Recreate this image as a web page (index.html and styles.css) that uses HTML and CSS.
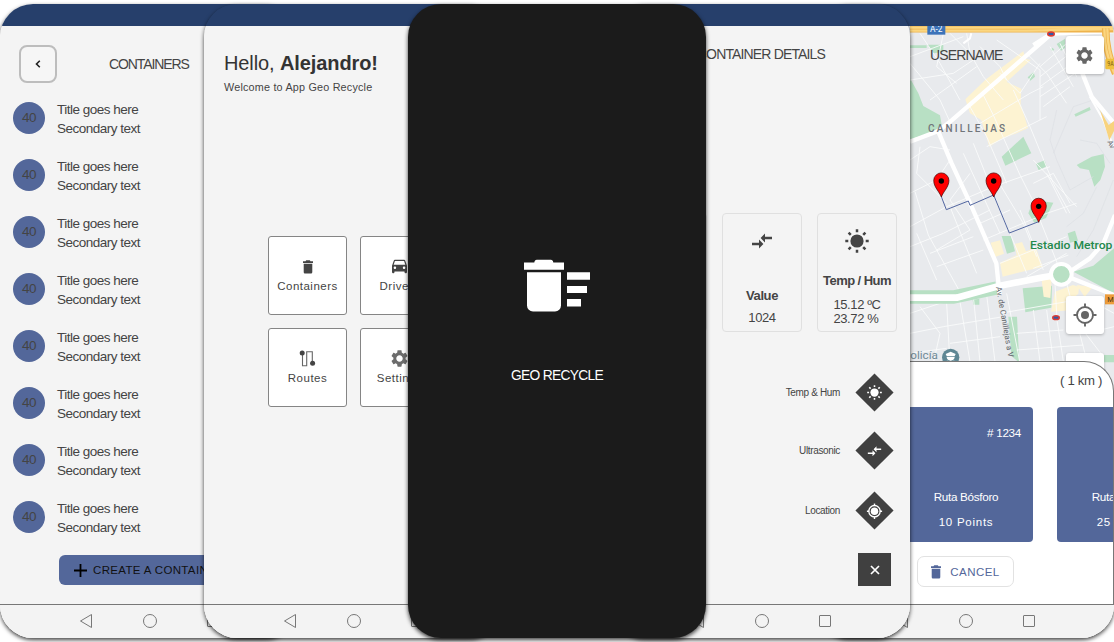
FILE: index.html
```html
<!DOCTYPE html>
<html lang="en">
<head>
<meta charset="utf-8">
<title>Geo Recycle</title>
<link rel="stylesheet" href="styles.css">
</head>
<body>
<svg class="defs" width="0" height="0">
  <defs>
    <symbol id="i-trash" viewBox="5 2 14 20" preserveAspectRatio="none"><path d="M6 19c0 1.4.9 2.4 2.2 2.4h7.600c1.300 0 2.200-1 2.200-2.400V7.200H6V19zM19 3.800h-3.500l-1-1.500h-5l-1 1.500H5v2.400h14z"/></symbol>
    <symbol id="i-gear" viewBox="2 2 20 20"><path d="M19.140 12.940c.040-.300.060-.610.060-.940 0-.320-.020-.640-.070-.940l2.030-1.580c.180-.140.230-.410.120-.610l-1.920-3.320c-.120-.220-.370-.290-.590-.220l-2.390.960c-.500-.380-1.030-.700-1.620-.940l-.360-2.540c-.040-.240-.240-.410-.480-.410h-3.840c-.240 0-.430.170-.470.410l-.360 2.540c-.590.240-1.130.570-1.620.940l-2.390-.960c-.220-.080-.470 0-.590.220L2.740 8.870c-.120.210-.080.470.120.610l2.030 1.580c-.050.300-.090.630-.090.940s.020.640.070.940l-2.030 1.580c-.180.140-.230.410-.120.610l1.920 3.320c.120.220.370.290.590.220l2.390-.960c.500.380 1.030.700 1.620.940l.360 2.540c.050.240.240.410.480.410h3.840c.240 0 .440-.170.470-.410l.360-2.540c.590-.240 1.130-.560 1.620-.940l2.390.960c.220.080.470 0 .590-.220l1.920-3.320c.120-.220.070-.470-.120-.610l-2.010-1.580zM12 15.800c-2.100 0-3.800-1.700-3.800-3.800s1.700-3.800 3.800-3.800 3.800 1.700 3.800 3.800-1.700 3.800-3.800 3.800z"/></symbol>
    <symbol id="i-car" viewBox="0 0 24 24"><path d="M18.920 5.010C18.720 4.420 18.160 4 17.500 4h-11c-.660 0-1.210.420-1.420 1.010L3 11v8c0 .550.450 1 1 1h1c.550 0 1-.450 1-1v-1h12v1c0 .550.450 1 1 1h1c.550 0 1-.450 1-1v-8l-2.080-5.990zM6.500 15c-.830 0-1.500-.670-1.500-1.500S5.670 12 6.500 12s1.500.670 1.500 1.500S7.330 15 6.500 15zm11 0c-.830 0-1.500-.670-1.500-1.500s.670-1.500 1.500-1.500 1.500.670 1.500 1.500-.670 1.500-1.500 1.500zM5 10l1.500-4.500h11L19 10H5z"/></symbol>
    <symbol id="i-compare" viewBox="0 0 24 24"><path d="M9 13.800H2v2.400h7v3.200L13.400 15 9 10.600zm6-.4v-3.200h7V7.800h-7V4.600L10.600 9z"/></symbol>
    <symbol id="i-sun" viewBox="-12 -12 24 24"><circle r="6.600"/><path d="M0-11.700V-8.700M0 11.700V8.700M-11.700 0h3M11.700 0h-3M-8.400-8.400l2.200 2.200M8.400-8.400L6.200-6.200M-8.400 8.400l2.200-2.200M8.400 8.400L6.200 6.200" stroke="currentColor" stroke-width="2.500"/></symbol>
    <symbol id="i-target" viewBox="-12 -12 24 24"><g fill="none" stroke="currentColor"><circle r="8" stroke-width="1.900"/><path d="M0-11.500V-7.500M0 11.500V7.500M-11.500 0h4M11.500 0h-4" stroke-width="1.900"/></g><circle r="4"/></symbol>
    <symbol id="i-ring" viewBox="-12 -12 24 24"><g fill="none" stroke="currentColor"><circle r="8.500" stroke-width="2"/><path d="M0-11.800V-8M0 11.800V8M-11.800 0H-8M11.800 0H8" stroke-width="2.200"/></g><circle r="5.600"/></symbol>
    <symbol id="i-back" viewBox="0 0 14 16"><path d="M12.500 1.500v13L1.500 8z" fill="none" stroke="currentColor"/></symbol>
    <g id="pin"><path d="M0 0C-2-5.500-7.600-10-7.600-16.500a7.600 7.600 0 0 1 15.200 0C7.600-10 2-5.500 0 0z" fill="#f00" stroke="#400" stroke-width=".7"/><circle cy="-16" r="2.700" fill="#000"/></g>
  </defs>
</svg>

<main class="stage">
  <section class="phone">
    <div class="status"></div>
    <div class="screen list-screen">
      <header class="list-head">
        <button class="back"><svg width="6" height="8" viewBox="0 0 6 8"><path d="M4.800.8 1.500 4l3.300 3.200" fill="none" stroke="#222" stroke-width="1.600"/></svg></button>
        <h2 class="caption">CONTAINERS</h2>
      </header>
      <ul class="list">
        <li class="row"><span class="badge">40</span><p>Title goes here<br>Secondary text</p></li>
        <li class="row"><span class="badge">40</span><p>Title goes here<br>Secondary text</p></li>
        <li class="row"><span class="badge">40</span><p>Title goes here<br>Secondary text</p></li>
        <li class="row"><span class="badge">40</span><p>Title goes here<br>Secondary text</p></li>
        <li class="row"><span class="badge">40</span><p>Title goes here<br>Secondary text</p></li>
        <li class="row"><span class="badge">40</span><p>Title goes here<br>Secondary text</p></li>
        <li class="row"><span class="badge">40</span><p>Title goes here<br>Secondary text</p></li>
        <li class="row"><span class="badge">40</span><p>Title goes here<br>Secondary text</p></li>
      </ul>
      <button class="create"><svg width="13" height="13" viewBox="0 0 13 13"><path d="M6.500 0v13M0 6.500h13" stroke="#000" stroke-width="1.800"/></svg>CREATE A CONTAINER</button>
    </div>
    <nav class="nav"><svg width="14" height="16"><use href="#i-back"/></svg><i class="home"></i><i class="recent"></i></nav>
  </section>

  <section class="phone mid">
    <div class="status"></div>
    <div class="screen home-screen">
      <h1 class="hello">Hello, <b>Alejandro!</b></h1>
      <p class="welcome">Welcome to App Geo Recycle</p>
      <div class="tiles">
        <div class="tile"><svg class="bin" width="10" height="14"><use href="#i-trash"/></svg>Containers</div>
        <div class="tile"><svg width="21" height="17"><use href="#i-car" width="21" height="20" y="-1.500"/></svg>Drivers</div>
        <div class="tile"><svg width="17" height="17" viewBox="0 0 17 17"><path d="M3.500 3v12.700h4.200V1.800h5.600v11" fill="none" stroke="#666" stroke-width="1.100"/><circle cx="3.200" cy="3" r="2.500"/><circle cx="13.600" cy="13.200" r="2.500"/></svg>Routes</div>
        <div class="tile"><svg class="grey" width="17" height="17"><use href="#i-gear"/></svg>Settings</div>
      </div>
    </div>
    <nav class="nav"><svg width="14" height="16"><use href="#i-back"/></svg><i class="home"></i><i class="recent"></i></nav>
  </section>

  <section class="phone splash">
    <svg class="logo" width="66" height="54" viewBox="0 0 66 54" fill="#fff"><path d="M0 3.500h10.300c.3-1.800 1-2.700 2.500-2.700h14c1.500 0 2.200.9 2.500 2.700H40v7.300H0zM3 13.300h34v33.200a6 6 0 0 1-6 6H9a6 6 0 0 1-6-6zM43 13.300h23v7.500H43zM43 27h20v7H43zM43 40h14v7.500H43z"/></svg>
    <p class="brand">GEO RECYCLE</p>
  </section>

  <section class="phone mid">
    <div class="status"></div>
    <div class="screen detail-screen">
      <h2 class="caption">CONTAINER DETAILS</h2>
      <div class="stats">
        <div class="stat"></div>
        <div class="stat value"><svg width="24" height="24"><use href="#i-compare"/></svg><b>Value</b><span>1024</span></div>
        <div class="stat temp"><svg width="24" height="24"><use href="#i-sun"/></svg><b>Temp / Hum</b><span>15.12 ºC<br>23.72 %</span></div>
      </div>
      <div class="actions">
        <div class="action">Temp &amp; Hum<span class="diamond"><svg width="15" height="15"><use href="#i-sun"/></svg></span></div>
        <div class="action">Ultrasonic<span class="diamond"><svg width="16" height="16"><use href="#i-compare"/></svg></span></div>
        <div class="action low">Location<span class="diamond"><svg width="16" height="16"><use href="#i-ring"/></svg></span></div>
      </div>
      <button class="close"><svg width="10" height="10" viewBox="0 0 10 10"><path d="M1 1l8 8M9 1l-8 8" stroke="#fff" stroke-width="1.700"/></svg></button>
    </div>
    <nav class="nav"><svg width="14" height="16"><use href="#i-back"/></svg><i class="home"></i><i class="recent"></i></nav>
  </section>

  <section class="phone">
    <div class="status"></div>
    <div class="screen map-screen">
      <svg class="map" width="298" height="370" viewBox="-252 78 894 1110">
        <rect x="-252" y="78" width="894" height="1110" fill="#e8eaed"/>
        <g fill="#b8e0c4">
          <path d="M30 235l25 45 15 38 50 28 5 28-22 22-73 22zM30 136h50v8H30zM82 134h48v22l-30 4zM383 232l18-16 4 14-14 12zM305 470l65-60 24 50-78 37zM408 491l26-10 6 18-24 12zM530 495l45-25 36-8 4 38-14 40-18 20-16-50-27-5zM523 343l46-22 3 9-45 20zM300 328l28-22v14l-26 18zM470 132l25-16v28l-12 8zM385 640l15-40 60 8-22 46-35 14zM305 708h28l12 46-24 7zM503 700l22-8 9 30-24 6zM520 815l60-18 62-52v135zM368 865l88-8-2 66-78 14zM325 950h26l7 138-24-20zM610 1065h32v22h-32zM218 900l20-4v18h-18zM452 148l6-5 5 6-6 5z"/>
        </g>
        <g fill="#fdf3d2">
          <path d="M196 298l62-60 112-84 6 22 16 4-72 66 44 20-2 46 22 72-34 16-46 16-36 24-24-80-34-20zM272 728l28-7 12 40-26 10zM300 788l50-22-6-34 22-6 12 28 30-10 20 56-120 30zM425 840l30-4-4 58-20-4zM465 875l54-20 18 6-2 20-22 20-2 30-58 4zM530 855l48 6-24 30z"/>
        </g>
        <g fill="none" stroke="#fafbfc" stroke-width="2.600">
          <path d="M30 190l90 110 32 70M60 100l60 90 60 110M130 100l-20 100 60 50M150 100l60 60 40 70 60 70M30 170l160-60M30 240l130-20 60-40M90 300l140-100M200 100l10 60M240 140l60 60 20 40M290 120l130 90v150M300 220l60 60 60-90M250 285l30 60 80 180 60 120M210 320l50 90 60 140M340 270l50 110 70 170 50 90M240 370l150-90 40-20M260 440l120-60 60-30M380 160l60 60 60 90M420 200l80-70M420 230l90-70M420 260l110-80M420 290l120-80M430 320l80-60M450 140l70 120M480 130l50 100"/>
          <path d="M30 480l60-40 60 10M30 580l80-40 40-60M60 440l-10 80 60 60 30 30M30 680l110-60 140-60 170-60M150 600l60 90-100 60M45 575l40 130 100 180M150 620l80 200M210 520l-60 80M190 460l110 240M220 430l100 250M280 520l90 150 40 100M240 670l90-40M250 720l190-80 90-30M300 790l200-80M330 700l50 120M360 630l70 180M420 660l60 150M400 480l130 140M400 550l60-30 50 90M440 520l60 120M30 740l100-40 140-70M50 700l60 140M90 760l130-50M110 800l140-50"/>
          <path d="M30 940l90-30 140-30M140 910l10 180M180 905l30 180M220 890l20 195M260 885l25 200M300 940l200-35M320 880l40 210M400 930l20 155M440 930l20 155M60 920l60 80-20 90M30 1000l100-20 180-30M30 1060l110-15M150 1030l150-20M350 1000l140-10M350 1050l200-15M510 940l100 130M465 850l6 110 20 130M500 850l60 230M380 830l120-70M400 805l105-40M570 900l72 40M560 1000l82-20"/>
        </g>
        <g fill="none" stroke="#dcdfe4" stroke-width="2"><path d="M460 460l60-140 60-20M470 330l-20 90 20 60 40 90 70-40M540 420l50 10 40 60M640 540l-60 150-50 80M590 560l-40 80-50 40"/></g>
        <g fill="none" stroke="#b8e0c4" stroke-width="40"><path d="M30 891h130l130-27"/></g>
        <g fill="none" stroke="#fff" stroke-linejoin="round">
          <path d="M30 893h140l130-36 130-25 60-10" stroke-width="20"/>
          <path d="M30 425l85-32 40-32 145-125 155-135M115 395l40 95 60 130 74 170 10 95" stroke-width="13"/>
          <path d="M400 135l55-34 190-8M545 215l30 75 67 80M510 815l60-40 40-45 35-85M515 835l127 50" stroke-width="13"/>
          <path d="M190 130l20-15 4-15M570 290l40 70 30 80" stroke-width="6"/>
        </g>
        <circle cx="484" cy="823" r="31" fill="#b8e0c4" stroke="#fff" stroke-width="12"/>
        <path d="M30 87h612" stroke="#eeb34d" stroke-width="21"/>
        <path d="M30 83h612M30 92h350l262-5" fill="none" stroke="#fbd680" stroke-width="7"/>
        <path d="M617 85c0 50 8 85 30 135" fill="none" stroke="#eeb34d" stroke-width="23"/>
        <path d="M613 85c0 50 8 85 30 135M622 85c0 50 8 85 30 135" fill="none" stroke="#fbd680" stroke-width="7"/>
        <path d="M600 330l26 45 16-12v30l-14 28z" fill="#f8d37e"/>
        <g class="map-text">
          <rect x="82" y="70" width="54" height="34" fill="#3c73b9"/><text x="109" y="96" font-size="25" fill="#fff" text-anchor="middle">A-2</text>
          <rect x="616" y="176" width="34" height="32" rx="4" fill="#efc13e"/><text x="622" y="199" font-size="20" textLength="19" lengthAdjust="spacingAndGlyphs" fill="#765b12">9A</text>
          <rect x="615" y="883" width="34" height="30" fill="#ed9d3c"/><text x="622" y="906" font-size="22" fill="#493211">M</text>
          <text class="district" x="84" y="396" font-size="30" textLength="231">CANILLEJAS</text>
          <text class="stadium" x="390" y="747" font-size="34" textLength="247" lengthAdjust="spacingAndGlyphs">Estadio Metrop</text>
          <text transform="translate(288 862) rotate(80)" font-size="24" fill="#62666b">Av. de Canillejas a V</text>
          <text x="9" y="1078" font-size="35" fill="#718b97">Policía</text>
          <text transform="translate(622 425) rotate(65)" font-size="22" fill="#62666b">Av</text>
        </g>
        <circle cx="152" cy="1072" r="26" fill="#5f8794"/><path d="M137 1062l15-7 15 7-3 6h-24zM140 1070c0 10 10 12 12 12s12-2 12-12zM132 1090c2-8 12-10 20-4 8-6 18-4 20 4z" fill="#fff"/>
        <g><ellipse cx="453" cy="102" rx="12" ry="8" fill="#dd3b32"/><rect x="446" y="99" width="14" height="6" fill="#315ba7"/><ellipse cx="468" cy="953" rx="12" ry="8" fill="#dd3b32"/><rect x="461" y="950" width="14" height="6" fill="#315ba7"/></g>
        <path d="M124 590l15 39 66-26 5 13 71-31 47 114 88-34" fill="none" stroke="#5266a0" stroke-width="3"/>
        <use href="#pin" transform="translate(124 591) scale(3)"/><use href="#pin" transform="translate(281 591) scale(3)"/><use href="#pin" transform="translate(416 667) scale(3)"/>
      </svg>
      <h2 class="caption user">USERNAME</h2>
      <button class="fab settings"><svg width="17" height="17"><use href="#i-gear"/></svg></button>
      <button class="fab locate"><svg width="24" height="24"><use href="#i-target"/></svg></button>
      <button class="fab more"></button>
      <div class="sheet">
        <p class="distance">( 1 km )</p>
        <div class="routes">
          <article class="route"><span class="num"># 1234</span><span class="name">Ruta Bósforo</span><span class="points">10 Points</span></article>
          <article class="route"><span class="num"># 1235</span><span class="name">Ruta Bósforo</span><span class="points">25 Points</span></article>
        </div>
        <button class="cancel"><svg width="10" height="14"><use href="#i-trash"/></svg>CANCEL</button>
      </div>
    </div>
    <nav class="nav"><svg width="14" height="16"><use href="#i-back"/></svg><i class="home"></i><i class="recent"></i></nav>
  </section>
</main>
</body>
</html>
```

FILE: styles.css
```css
* { box-sizing: border-box; }
body { margin: 0; background: #fff; overflow: hidden; font: 13.500px "Liberation Sans", Arial, sans-serif; color: #444; }
h1, h2, p, ul { margin: 0; padding: 0; font-weight: 400; }
button { font: inherit; border: 0; padding: 0; display: flex; align-items: center; justify-content: center; }
svg { display: block; fill: currentColor; flex: none; }
.defs { position: absolute; }
.stage { display: flex; height: 642px; padding-top: 4px; overflow: hidden; }
.phone { flex: none; width: 298px; height: 634px; margin-right: -94px; border-radius: 33px; overflow: hidden; display: flex; flex-direction: column; background: linear-gradient(#263f6b 22px, #f4f4f4 22px); box-shadow: 0 2px 4px rgba(0,0,0,.75); position: relative; }
.mid { z-index: 1; }
.splash { z-index: 2; background: #1b1b1b; align-items: center; color: #fff; }
.status { height: 22px; flex: none; }
.screen { height: 578px; flex: none; display: flex; flex-direction: column; }
.nav { height: 34px; border-top: 1px solid #777; background: #f3f3f3; display: flex; align-items: center; padding: 0 0 1px 79px; color: #777; }
.home { width: 14px; height: 14px; margin-left: 50px; border: 1px solid #777; border-radius: 50%; }
.recent { width: 12px; height: 12px; margin-left: 50px; border: 1px solid #777; border-radius: 1px; }
.caption { font-size: 14px; letter-spacing: -.85px; line-height: 16px; transform-origin: left; white-space: nowrap; }

.list-head { display: flex; align-items: center; gap: 52px; padding: 19px 0 0 19px; }
.list-head .caption { letter-spacing: -1.100px; }
.back { width: 38px; height: 38px; border: 2px solid #bdbdbd; border-radius: 8px; background: #f6f6f6; }
.list { list-style: none; padding-top: 6px; }
.row { height: 57px; display: flex; align-items: center; gap: 12px; padding-left: 13px; line-height: 19px; letter-spacing: -.5px; }
.row p { padding-top: 2px; }
.badge { width: 32px; height: 32px; border-radius: 50%; background: #53679a; text-align: center; line-height: 32px; }
.create { width: 180px; height: 30px; margin: 10px 0 0 59px; border-radius: 6px; background: #53679a; color: #111; font-size: 11.500px; letter-spacing: .35px; gap: 6px; justify-content: flex-start; padding-left: 15px; white-space: nowrap; }

.hello { font-size: 20px; line-height: 24px; letter-spacing: -.1px; padding: 25px 0 0 20px; color: #333; }
.welcome { font-size: 10.800px; line-height: 14px; letter-spacing: .2px; padding: 5px 0 0 20px; }
.tiles { display: grid; grid-template-columns: 79px 79px; grid-auto-rows: 79px; gap: 13px; margin: 142px 0 0 64px; }
.tile { border: 1px solid #858585; border-radius: 3px; background: #fff; display: flex; flex-direction: column; align-items: center; padding-top: 21px; gap: 4px; font-size: 11.500px; line-height: 15px; letter-spacing: .5px; }
.bin { margin: 2px 0 1px; }
.grey { color: #6c6c6c; }

.logo { margin: 255px 0 0 0; }
.brand { margin-top: 55px; font-size: 13.800px; letter-spacing: -.7px; line-height: 16px; }

.detail-screen { align-items: flex-end; }
.detail-screen .caption { padding: 20px 85px 0 0; }
.stats { display: flex; gap: 15px; margin: 151px 13px 0 0; }
.stat { width: 80px; height: 119px; border: 1px solid #e0e0e0; border-radius: 4px; display: flex; flex-direction: column; align-items: center; font-size: 13px; letter-spacing: -.4px; line-height: 14px; white-space: nowrap; }
.value { padding-top: 15px; }
.value b { margin-top: 36px; }
.value span { margin-top: 8px; }
.temp { padding-top: 15px; }
.temp b { margin-top: 21px; letter-spacing: -.55px; }
.temp span { margin-top: 10px; line-height: 13.500px; }
.actions { margin: 47px 22px 0 0; display: flex; flex-direction: column; gap: 31px; }
.action { display: flex; align-items: center; justify-content: flex-end; gap: 21px; height: 27px; font-size: 10px; letter-spacing: -.35px; }
.low { margin-top: 2px; }
.diamond { width: 27px; height: 27px; background: #404040; transform: rotate(45deg); display: grid; place-items: center; color: #fff; }
.diamond svg { transform: rotate(-45deg); }
.close { width: 33px; height: 33px; background: #404040; margin: 29px 19px 0 0; }

.map-screen { position: relative; }
.map { position: absolute; left: 0; top: 0; }
.map-text { font-family: Roboto, sans-serif; }
.district { fill: #70757a; font-weight: 500; }
.stadium { fill: #24894c; font-weight: 500; }
.user { position: absolute; left: 114px; top: 21px; }
.fab { position: absolute; left: 250px; width: 38px; height: 38px; background: #fff; border-radius: 3px; box-shadow: 0 1px 3px rgba(0,0,0,.25); color: #666; }
.settings { top: 10px; padding-right: 2px; }
.locate { top: 270px; }
.more { top: 327px; }
.sheet { position: relative; margin-top: 335px; height: 243px; background: #fff; border: 1px solid #777; border-bottom: 0; border-radius: 0 30px 0 0; overflow: hidden; }
.distance { text-align: right; padding: 11px 11px 0 0; line-height: 16px; font-size: 13.200px; letter-spacing: -.35px; }
.routes { display: flex; gap: 24px; margin: 18px 0 0 82px; color: #fff; }
.route { flex: none; width: 134px; height: 135px; border-radius: 4px; background: #53679a; display: flex; flex-direction: column; align-items: center; font-size: 11.700px; letter-spacing: -.3px; line-height: 14px; }
.num { align-self: flex-end; padding: 19px 12px 0 0; }
.name { margin-top: 50px; }
.points { margin-top: 11px; font-size: 11.500px; letter-spacing: .75px; }
.cancel { width: 97px; height: 31px; margin: 14px 0 0 100px; border: 1px solid #e2e2e2; border-radius: 7px; background: #fff; color: #53679a; font-size: 11.500px; letter-spacing: .45px; gap: 9px; }
```
